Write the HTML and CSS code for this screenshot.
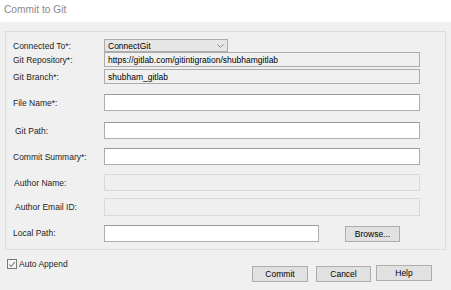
FILE: index.html
```html
<!DOCTYPE html>
<html>
<head>
<meta charset="utf-8">
<link rel="stylesheet" href="styles.css">
</head>
<body>
<div class="titlebar">Commit to Git</div>
<div class="dialog">
  <div class="panel">
    <div class="row r1">
      <div class="label">Connected To*:</div>
      <div class="select"><span>ConnectGit</span>
        <svg class="chev" width="7" height="4" viewBox="0 0 7 4"><path d="M0.5 0.5 L3.5 3.3 L6.5 0.5" fill="none" stroke="#8a8a8a" stroke-width="1"/></svg>
      </div>
    </div>
    <div class="row r2">
      <div class="label">Git Repository*:</div>
      <div class="field ro h15">https://gitlab.com/gitintigration/shubhamgitlab</div>
    </div>
    <div class="row r3">
      <div class="label">Git Branch*:</div>
      <div class="field ro h15">shubham_gitlab</div>
    </div>
    <div class="row r4">
      <div class="label">File Name*:</div>
      <div class="field h17"></div>
    </div>
    <div class="row r5">
      <div class="label in2">Git Path:</div>
      <div class="field h17"></div>
    </div>
    <div class="row r6">
      <div class="label">Commit Summary*:</div>
      <div class="field h17"></div>
    </div>
    <div class="row r7">
      <div class="label in1">Author Name:</div>
      <div class="field dis h17"></div>
    </div>
    <div class="row r8">
      <div class="label in2">Author Email ID:</div>
      <div class="field dis h18"></div>
    </div>
    <div class="row r9">
      <div class="label">Local Path:</div>
      <div class="field h17 short"></div>
      <div class="btn browse">Browse...</div>
    </div>
  </div>
  <div class="footer">
    <div class="check">
      <span class="box"><svg width="9" height="9" viewBox="0 0 9 9"><path d="M1.5 4.5 L3.6 6.8 L7.6 1.8" fill="none" stroke="#555" stroke-width="1.1"/></svg></span>
      <span>Auto Append</span>
    </div>
    <div class="buttons">
      <div class="btn b-commit">Commit</div>
      <div class="btn b-cancel">Cancel</div>
      <div class="btn b-help">Help</div>
    </div>
  </div>
</div>
</body>
</html>
```
FILE: styles.css
```css
html, body {
  margin: 0;
  padding: 0;
}
body {
  width: 451px;
  height: 290px;
  overflow: hidden;
  background: #f0f0f0;
  font-family: "Liberation Sans", Arial, sans-serif;
  font-size: 8.5px;
  color: #1e1e1e;
}
.titlebar {
  height: 22px;
  background: #ffffff;
  color: #8a8a8a;
  font-size: 10.2px;
  line-height: 20px;
  padding-left: 4px;
  box-sizing: border-box;
}
.dialog {
  padding: 9px 5px 0 5px;
}
.panel {
  width: 441px;
  height: 219px;
  box-sizing: border-box;
  border: 1px solid #dcdcdc;
  padding: 7px 0 0 7px;
}
.row {
  display: flex;
  align-items: center;
}
.label {
  width: 91px;
  flex: none;
  white-space: nowrap;
}
.label.in1 { padding-left: 1px; width: 90px; }
.label.in2 { padding-left: 2px; width: 89px; }
.r2 { margin-top: 0; }
.r3 { margin-top: 2px; }
.r4 { margin-top: 10px; }
.r5 { margin-top: 11px; }
.r6 { margin-top: 9px; }
.r7 { margin-top: 9px; }
.r8 { margin-top: 7px; }
.r9 { margin-top: 8px; }
.select {
  width: 124px;
  height: 13px;
  box-sizing: border-box;
  border: 1px solid #acacac;
  background: #e6e6e6;
  display: flex;
  align-items: center;
  justify-content: space-between;
  padding: 0 3px 0 3px;
  color: #000;
}
.field {
  width: 316px;
  box-sizing: border-box;
  border: 1px solid #adadad;
  border-top-color: #9a9a9a;
  background: #ffffff;
  padding-left: 3px;
  display: flex;
  align-items: center;
  color: #000;
  white-space: nowrap;
}
.field.ro {
  background: #f0f0f0;
  border-color: #acacac;
}
.field.dis {
  background: #efefef;
  border-color: #d9d9d9;
}
.h15 { height: 15px; }
.h17 { height: 17px; }
.h18 { height: 18px; }
.field.short { width: 215px; }
.btn {
  box-sizing: border-box;
  border: 1px solid #adadad;
  background: #e1e1e1;
  display: flex;
  align-items: center;
  justify-content: center;
  color: #000;
}
.browse {
  width: 55px;
  height: 16px;
  margin-left: 26px;
  margin-top: 2px;
}
.footer {
  display: flex;
  align-items: flex-start;
  justify-content: space-between;
  padding-left: 2px;
  padding-right: 14px;
}
.check {
  display: flex;
  align-items: center;
  margin-top: 9px;
}
.box {
  width: 10px;
  height: 10px;
  box-sizing: border-box;
  border: 1px solid #7a7a7a;
  background: #f4f4f4;
  display: flex;
  align-items: center;
  justify-content: center;
  margin-right: 2px;
}
.box svg { display: block; }
.buttons {
  display: flex;
  align-items: flex-start;
  margin-top: 16px;
}
.b-commit { width: 56px; height: 16px; }
.b-cancel { width: 55px; height: 16px; margin-left: 8px; }
.b-help { width: 56px; height: 16px; margin-left: 5px; margin-top: -1px; }
```
